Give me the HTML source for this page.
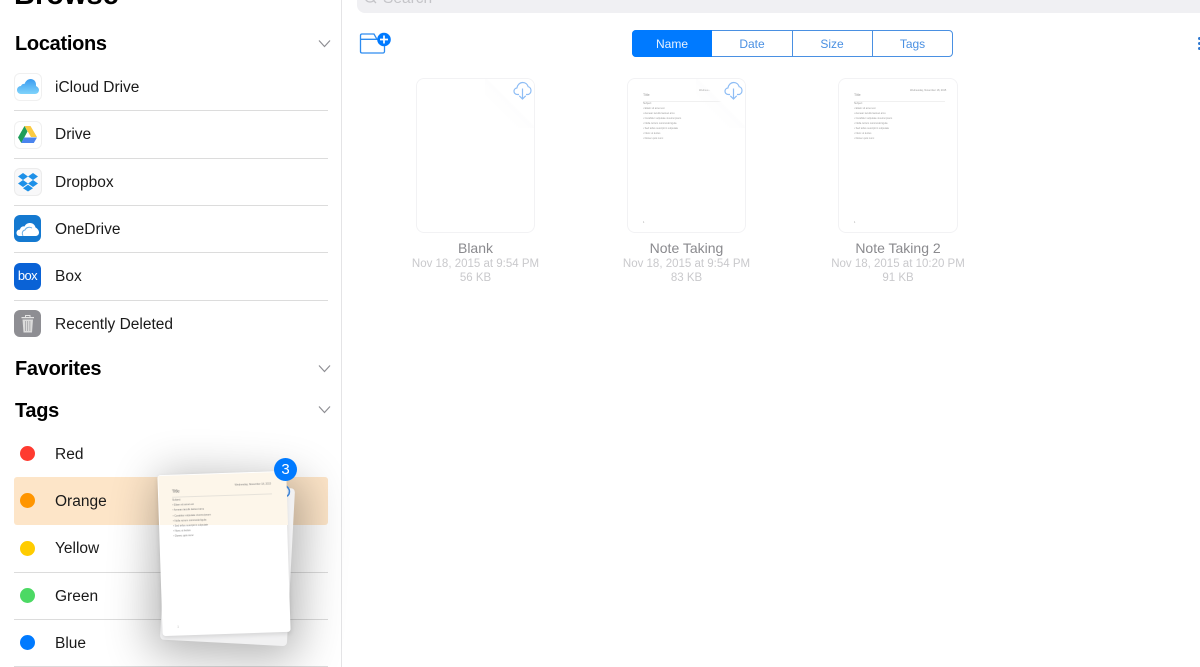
<!DOCTYPE html>
<html><head><meta charset="utf-8">
<style>
html,body{margin:0;padding:0;background:#fff}
#p{position:relative;width:1200px;height:667px;overflow:hidden;background:#fff;font-family:"Liberation Sans",sans-serif;color:#111}
#p div,#p svg{position:absolute}
.h{left:15px;font-size:20px;font-weight:bold;line-height:24px;letter-spacing:-.3px;color:#000}
.r{left:55px;font-size:15.5px;line-height:20px;color:#1a1a1a;white-space:nowrap}
.s{left:14px;width:314px;height:1px;background:#dcdcdc}
.i{left:14px;width:27px;height:27px;border-radius:6px;overflow:hidden}
.d{left:20px;width:15px;height:15px;border-radius:50%}
.seg{top:31px;height:26px;line-height:26px;text-align:center;font-size:12px;color:#4a90e2}
.t{top:78px;width:117px;height:153px;border:1px solid #f2f2f4;border-radius:8px;background:#fff;overflow:hidden}
.l1,.l2,.l3{text-align:center;white-space:nowrap;width:200px}
.l1{top:240px;font-size:14px;line-height:17px;color:#8a8a8e}
.l2{top:257px;font-size:11.5px;line-height:14px;color:#c9c9cc}
.l3{top:271px;font-size:11.5px;line-height:14px;color:#c9c9cc}
.n{font-size:2.5px;line-height:5px;color:#999;white-space:nowrap;filter:blur(.3px)}
.fade{right:-1px;top:-1px;width:50px;height:50px;background:linear-gradient(45deg,rgba(244,244,246,0) 30%,rgba(244,244,246,.2) 49%,#fff 52%)}
</style></head><body><div id="p">

<div style="left:341px;top:0;width:1px;height:667px;background:#e4e4e6"></div>
<div style="left:14px;top:-22px;font-size:29px;font-weight:bold;line-height:34px;color:#000">Browse</div>

<div class="h" style="top:32px">Locations</div>
<svg style="left:318px;top:39px" width="13" height="9" viewBox="0 0 13 9"><path d="M1 1.500L6.500 7.500L12 1.500" fill="none" stroke="#8e8e93" stroke-width="1.200"/></svg>

<div class="i" style="top:73px;border:1px solid #f0f0f0;width:26px;height:26px;background:#fff">
<svg width="26" height="26" viewBox="0 0 26 26"><defs><linearGradient id="ic" x1="0" y1="0" x2="0" y2="1"><stop offset="0" stop-color="#3b9cf0"/><stop offset="1" stop-color="#7fd3fb"/></linearGradient></defs><path d="M6 20C3.500 20 2 18 2 16C2 13.500 4 12 6 12C6.500 10.500 8 9.500 9.500 10C10.500 7 13 5 15.500 5C19 5 21 7.500 21 10.500C21 11 21 11.500 21 12C23 13 24 14.500 24 16C24 18.500 22 20 20 20Z" fill="url(#ic)"/></svg></div>
<div class="r" style="top:78px">iCloud Drive</div>
<div class="s" style="top:110px"></div>

<div class="i" style="top:121px;border:1px solid #f0f0f0;width:26px;height:26px;background:#fff">
<svg width="26" height="26" viewBox="0 0 26 26"><path d="M9.500 4H15.500L22 15H16Z" fill="#fbcb43"/><path d="M9.500 4L3 15.500L6.300 21L12.500 9.500Z" fill="#1e9e5a"/><path d="M9 15.500H22L18.800 21H6.300Z" fill="#4a84ee"/></svg></div>
<div class="r" style="top:125px">Drive</div>
<div class="s" style="top:158px"></div>

<div class="i" style="top:168px;border:1px solid #ececec;width:26px;height:26px;background:#f8f8f9">
<svg width="26" height="26" viewBox="0 0 26 26" fill="#1d90e8"><path d="M8 4L13 7.500L8 11L3 7.500Z"/><path d="M18 4L23 7.500L18 11L13 7.500Z"/><path d="M8 11L13 14.500L8 18L3 14.500Z"/><path d="M18 11L23 14.500L18 18L13 14.500Z"/><path d="M13 15.800L18 19.200L13 22.500L8 19.200Z"/></svg></div>
<div class="r" style="top:173px">Dropbox</div>
<div class="s" style="top:205px"></div>

<div class="i" style="top:215px;background:#1479d0">
<svg width="27" height="27" viewBox="0 0 27 27"><path d="M5.500 21C3.500 21 2.500 19.500 2.500 18C2.500 16 4 14.500 6 14.500C6.500 12 8.500 11 10.500 11.500C11.500 9.300 13.500 8 16 8C19 8 21 10 21.500 12.500C23.500 13.500 25 15.500 25 17.500C25 19.800 23.300 21 21.500 21Z" fill="#fff"/><path d="M9 20.800C7.500 18 8.500 15.500 11 15C12 12.500 15 11.500 18 13" fill="none" stroke="#6fb1e6" stroke-width="1"/></svg></div>
<div class="r" style="top:220px">OneDrive</div>
<div class="s" style="top:252px"></div>

<div class="i" style="top:263px;background:#0a62d6;color:#fff;font-size:13px;line-height:26px;text-align:center;letter-spacing:-.6px">box</div>
<div class="r" style="top:267px">Box</div>
<div class="s" style="top:300px"></div>

<div class="i" style="top:310px;background:#8e8e93">
<svg width="27" height="27" viewBox="0 0 27 27"><path d="M7.500 7H20V8.300H7.500Z" fill="#e4e4e4"/><path d="M11.500 7V5.500H16V7" fill="none" stroke="#e4e4e4" stroke-width="1"/><path d="M8.500 9.500H19L18 22.500H9.500Z" fill="#dcdcdc"/><path d="M11.500 11V21M13.700 11V21M15.900 11V21" stroke="#9a9a9e" stroke-width=".7"/></svg></div>
<div class="r" style="top:315px">Recently Deleted</div>

<div class="h" style="top:357px">Favorites</div>
<svg style="left:318px;top:364px" width="13" height="9" viewBox="0 0 13 9"><path d="M1 1.500L6.500 7.500L12 1.500" fill="none" stroke="#8e8e93" stroke-width="1.200"/></svg>
<div class="h" style="top:399px">Tags</div>
<svg style="left:318px;top:405px" width="13" height="9" viewBox="0 0 13 9"><path d="M1 1.500L6.500 7.500L12 1.500" fill="none" stroke="#8e8e93" stroke-width="1.200"/></svg>

<div class="d" style="top:446px;background:#ff3b30"></div>
<div class="r" style="top:445px">Red</div>
<div style="left:14px;top:477px;width:314px;height:48px;background:#fde5c8;border-radius:3px"></div>
<div class="d" style="top:493px;background:#ff9500"></div>
<div class="r" style="top:492px">Orange</div>
<div class="d" style="top:541px;background:#ffcc00"></div>
<div class="r" style="top:539px">Yellow</div>
<div class="s" style="top:572px"></div>
<div class="d" style="top:588px;background:#4cd964"></div>
<div class="r" style="top:587px">Green</div>
<div class="s" style="top:619px"></div>
<div class="d" style="top:635px;background:#007aff"></div>
<div class="r" style="top:634px">Blue</div>
<div class="s" style="top:666px"></div>

<!-- search -->
<div style="left:357px;top:-20px;width:860px;height:33px;background:#f0f0f3;border-radius:8px"></div>
<svg style="left:362px;top:-10px" width="16" height="16" viewBox="0 0 16 16"><circle cx="8" cy="7" r="5" fill="none" stroke="#c4c4c8" stroke-width="1.300"/><path d="M11.500 10.500L14 13" stroke="#c4c4c8" stroke-width="1.300"/></svg>
<div style="left:383px;top:-10px;font-size:15.500px;line-height:18px;color:#c4c4c8">Search</div>

<!-- new folder -->
<svg style="left:359px;top:31px" width="33" height="24" viewBox="0 0 33 24"><path d="M1.500 8.300V4.500C1.500 3.500 2 3 3 3H15L18 8.300H1.500V20.500C1.500 21.300 2 22 3 22H24C24.800 22 25.500 21.300 25.500 20.500V14" fill="none" stroke="#2d8cf0" stroke-width="1.300"/><circle cx="25" cy="8.500" r="6.800" fill="#007aff"/><path d="M25 4.500V12.500M21 8.500H29" stroke="#fff" stroke-width="1.700"/></svg>

<!-- segmented -->
<div style="left:632px;top:30px;width:319px;height:25px;border:1px solid #4a90e2;border-radius:4px"></div>
<div style="left:632px;top:30px;width:80px;height:27px;background:#007aff;border-radius:4px 0 0 4px"></div>
<div class="seg" style="left:632px;width:80px;color:#e8f2ff">Name</div>
<div class="seg" style="left:712px;width:80px">Date</div>
<div style="left:792px;top:30px;width:1px;height:27px;background:#4a90e2"></div>
<div class="seg" style="left:792px;width:80px">Size</div>
<div style="left:872px;top:30px;width:1px;height:27px;background:#4a90e2"></div>
<div class="seg" style="left:872px;width:81px">Tags</div>

<!-- dots -->
<div style="left:1198px;top:37px;width:3px;height:3px;border-radius:50%;background:#2d78d0"></div>
<div style="left:1198px;top:42px;width:3px;height:3px;border-radius:50%;background:#2d78d0"></div>
<div style="left:1198px;top:47px;width:3px;height:3px;border-radius:50%;background:#2d78d0"></div>

<!-- thumbnails -->
<div class="t" style="left:416px"><div class="fade"></div></div>
<svg style="left:513px;top:81px" width="19" height="19" viewBox="0 0 19 19"><path d="M6 13.500H4.500C2.500 13.500 1 12 1 10.200C1 8.500 2.300 7.200 3.900 7C4.400 3.800 6.800 1.500 9.800 1.500C12.400 1.500 14.500 3.200 15.200 5.700C16.900 6.100 18 7.800 18 9.600C18 11.700 16.500 13.500 14.500 13.500H13M9.500 7.500V18M6.300 14.800L9.500 18L12.700 14.800" fill="none" stroke="#8ebdf5" stroke-width="1.200"/></svg>

<div class="t" style="left:627px">
<div class="n" style="left:15px;top:14px;font-size:3.600px">Title</div>
<div class="n" style="left:71px;top:9px">Wednesday, Nov</div>
<div style="left:15px;top:22px;width:90px;height:1px;background:#f0f0f0"></div>
<div class="n" style="left:15px;top:22px">Subject<br>• Etiam sit amet est<br>• Aenean iaculis laoreet arcu<br>• Curabitur vulputate viverra ipsum<br>• Nulla rutrum commodo ligula<br>• Sed tellus suscipit in vulputate<br>• Nunc ut lectus<br>• Donec quis nunc</div>
<div class="n" style="left:15px;top:141px">1</div>
<div class="fade"></div></div>
<svg style="left:724px;top:81px" width="19" height="19" viewBox="0 0 19 19"><path d="M6 13.500H4.500C2.500 13.500 1 12 1 10.200C1 8.500 2.300 7.200 3.900 7C4.400 3.800 6.800 1.500 9.800 1.500C12.400 1.500 14.500 3.200 15.200 5.700C16.900 6.100 18 7.800 18 9.600C18 11.700 16.500 13.500 14.500 13.500H13M9.500 7.500V18M6.300 14.800L9.500 18L12.700 14.800" fill="none" stroke="#8ebdf5" stroke-width="1.200"/></svg>

<div class="t" style="left:838px;width:118px">
<div class="n" style="left:15px;top:14px;font-size:3.600px">Title</div>
<div class="n" style="left:71px;top:9px">Wednesday, November 18, 2015</div>
<div style="left:15px;top:22px;width:91px;height:1px;background:#f0f0f0"></div>
<div class="n" style="left:15px;top:22px">Subject<br>• Etiam sit amet est<br>• Aenean iaculis laoreet arcu<br>• Curabitur vulputate viverra ipsum<br>• Nulla rutrum commodo ligula<br>• Sed tellus suscipit in vulputate<br>• Nunc ut lectus<br>• Donec quis nunc</div>
<div class="n" style="left:15px;top:141px">1</div>
</div>

<div class="l1" style="left:375.500px">Blank</div>
<div class="l2" style="left:375.500px">Nov 18, 2015 at 9:54 PM</div>
<div class="l3" style="left:375.500px">56 KB</div>
<div class="l1" style="left:586.500px">Note Taking</div>
<div class="l2" style="left:586.500px">Nov 18, 2015 at 9:54 PM</div>
<div class="l3" style="left:586.500px">83 KB</div>
<div class="l1" style="left:798px">Note Taking 2</div>
<div class="l2" style="left:798px">Nov 18, 2015 at 10:20 PM</div>
<div class="l3" style="left:798px">91 KB</div>

<!-- dragged stack -->
<div style="left:164px;top:485px;width:127px;height:158px;background:#f1f1f2;border-radius:4px;transform:rotate(3deg);box-shadow:0 3px 45px 10px rgba(0,0,0,.3)"></div>
<svg style="left:280px;top:484px" width="14" height="16" viewBox="0 0 14 16"><path d="M6 2C9 4 10 7 9 10C8 12 6 13 3 13" fill="none" stroke="#3f86d8" stroke-width="1.500"/></svg>
<div style="left:160px;top:473px;width:128px;height:161px;background:#fff;border-radius:3px;transform:rotate(-1.900deg);box-shadow:0 2px 5px rgba(0,0,0,.12)"></div>
<div style="left:150px;top:465px;width:150px;height:60px;background:#fdf6ea;clip-path:polygon(8.200px 11px,136.200px 6.800px,138px 60px,10px 60px)"></div>
<div style="left:160px;top:473px;width:128px;height:161px;transform:rotate(-1.900deg)">
<div class="n" style="left:14px;top:14px;font-size:4.200px;color:#666">Title</div>
<div class="n" style="left:77px;top:10px;color:#777">Wednesday, November 18, 2015</div>
<div style="left:14px;top:22px;width:100px;height:1px;background:#e6e2da"></div>
<div class="n" style="left:14px;top:23px;color:#777;line-height:5.200px">Subject<br>• Etiam sit amet est<br>• Aenean iaculis laoreet arcu<br>• Curabitur vulputate viverra ipsum<br>• Nulla rutrum commodo ligula<br>• Sed tellus suscipit in vulputate<br>• Nunc ut lectus<br>• Donec quis nunc</div>
<div class="n" style="left:15px;top:150px">1</div>
</div>
<div style="left:274px;top:458px;width:23px;height:23px;border-radius:50%;background:#007aff;color:#fff;font-size:15px;line-height:23px;text-align:center">3</div>

</div></body></html>
